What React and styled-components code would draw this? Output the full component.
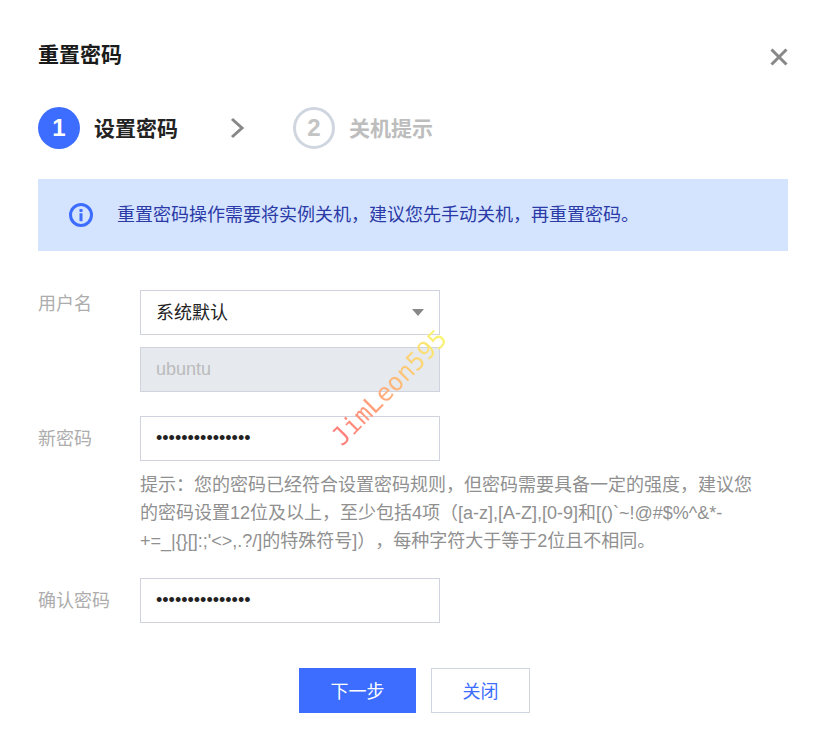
import React from "react";
import styled, { createGlobalStyle } from "styled-components";

const GlobalStyle = createGlobalStyle`
  html, body {
    margin: 0;
    padding: 0;
    background: #fff;
    font-family: "Liberation Sans", "Noto Sans CJK SC", sans-serif;
  }
`;

const Dialog = styled.div`
  position: relative;
  box-sizing: border-box;
  width: 824px;
  height: 750px;
  padding: 37px 36px 0 38px;
  overflow: hidden;
`;

const Header = styled.div`
  display: flex;
  justify-content: space-between;
  align-items: center;
  height: 36px;
`;

const Title = styled.h2`
  margin: 0;
  font-size: 21px;
  line-height: 36px;
  font-weight: 700;
  color: #1a1a1a;
`;

const CloseButton = styled.button`
  display: flex;
  border: none;
  background: none;
  padding: 0;
  margin: 4px 0 0 0;
  cursor: pointer;
`;

const Steps = styled.div`
  display: flex;
  align-items: center;
  height: 42px;
  margin-top: 34px;
`;

const StepNum = styled.div`
  box-sizing: border-box;
  width: 42px;
  height: 42px;
  border-radius: 50%;
  display: flex;
  align-items: center;
  justify-content: center;
  font-size: 24px;
  font-weight: 700;
  color: ${(p) => (p.$active ? "#fff" : "#c4c4c4")};
  background: ${(p) => (p.$active ? "#3d6dff" : "#fff")};
  border: ${(p) => (p.$active ? "none" : "3px solid #d0d6e0")};
`;

const StepLabel = styled.span`
  margin-left: 14px;
  padding-bottom: 2px;
  font-size: 21px;
  font-weight: 700;
  color: ${(p) => (p.$active ? "#222" : "#bdbdbd")};
`;

const StepArrow = styled.svg`
  margin: 0 48px 0 51px;
  display: block;
`;

const Notice = styled.div`
  display: flex;
  align-items: center;
  gap: 24px;
  height: 72px;
  margin-top: 30px;
  padding-left: 31px;
  background: #d5e4fe;
  font-size: 18px;
  color: #2a3aa6;
`;

const NoticeText = styled.span`
  padding-bottom: 5px;
`;

const Form = styled.div`
  display: flex;
  flex-direction: column;
  margin-top: 39px;
`;

const Row = styled.div`
  display: grid;
  grid-template-columns: 102px 1fr;
  margin-top: ${(p) => p.$top || 0}px;
`;

const Label = styled.label`
  font-size: 18px;
  line-height: 26px;
  padding-top: ${(p) => p.$pad ?? 10}px;
  color: #adadad;
`;

const Stack = styled.div`
  display: flex;
  flex-direction: column;
  gap: 12px;
`;

const Select = styled.div`
  box-sizing: border-box;
  width: 300px;
  height: 45px;
  display: flex;
  align-items: center;
  justify-content: space-between;
  padding: 0 15px 3px;
  border: 1px solid #d0d3de;
  font-size: 18px;
  color: #222;
`;

const Caret = styled.span`
  width: 0;
  height: 0;
  margin-top: 3px;
  border-left: 6px solid transparent;
  border-right: 6px solid transparent;
  border-top: 7px solid #888;
`;

const Input = styled.input`
  box-sizing: border-box;
  display: block;
  width: 300px;
  height: 45px;
  padding: 0 15px;
  border: 1px solid #d0d3de;
  border-radius: 0;
  outline: none;
  font-family: inherit;
  font-size: 18px;
  color: ${(p) => (p.disabled ? "#bbb" : "#222")};
  background: ${(p) => (p.disabled ? "#e6e9ee" : "#fff")};
  &:disabled {
    opacity: 1;
    -webkit-text-fill-color: #bbb;
  }
`;

const Hint = styled.p`
  margin: 10px 0 0;
  width: 620px;
  font-size: 18px;
  line-height: 28px;
  color: #909090;
  white-space: nowrap;
  text-spacing-trim: space-all;
`;

const Footer = styled.div`
  display: flex;
  justify-content: center;
  gap: 15px;
  margin-top: 45px;
  padding-left: 3px;
`;

const Button = styled.button`
  box-sizing: border-box;
  width: ${(p) => (p.$primary ? "117px" : "99px")};
  height: 45px;
  padding: 0 0 2px;
  border: 1px solid ${(p) => (p.$primary ? "#3d6dff" : "#d0d6e0")};
  border-radius: 0;
  background: ${(p) => (p.$primary ? "#3d6dff" : "#fff")};
  color: ${(p) => (p.$primary ? "#fff" : "#3d6dff")};
  font-family: inherit;
  font-size: 18px;
  cursor: pointer;
`;

const Watermark = styled.div`
  position: absolute;
  left: 314px;
  top: 373px;
  width: 151px;
  font-family: "DejaVu Sans Mono", monospace;
  font-size: 25px;
  line-height: 29px;
  white-space: nowrap;
  transform: rotate(-45deg);
  background: linear-gradient(90deg, #ff7a7a 0%, #ffb27a 50%, #f8f870 100%);
  -webkit-background-clip: text;
  background-clip: text;
  color: transparent;
  pointer-events: none;
`;

const hintLines = [
  "提示：您的密码已经符合设置密码规则，但密码需要具备一定的强度，建议您",
  "的密码设置12位及以上，至少包括4项（[a-z],[A-Z],[0-9]和[()`~!@#$%^&*-",
  "+=_|{}[]:;'<>,.?/]的特殊符号]），每种字符大于等于2位且不相同。",
];

const App = () => {
  return (
    <>
      <GlobalStyle />
      <Dialog>
        <Header>
          <Title>重置密码</Title>
          <CloseButton aria-label="关闭">
            <svg width="18" height="18" viewBox="0 0 18 18">
              <path d="M1.5 1.5 L16.5 16.5 M16.5 1.5 L1.5 16.5" stroke="#888" strokeWidth="3" fill="none" />
            </svg>
          </CloseButton>
        </Header>

        <Steps>
          <StepNum $active>1</StepNum>
          <StepLabel $active>设置密码</StepLabel>
          <StepArrow width="16" height="24" viewBox="0 0 16 24">
            <path d="M3 3 L13 12 L3 21" stroke="#888" strokeWidth="3" fill="none" />
          </StepArrow>
          <StepNum>2</StepNum>
          <StepLabel>关机提示</StepLabel>
        </Steps>

        <Notice>
          <svg width="24" height="24" viewBox="0 0 24 24">
            <circle cx="12" cy="12" r="10.5" stroke="#3d6dff" strokeWidth="3" fill="none" />
            <rect x="10.5" y="6" width="3" height="3" fill="#3d6dff" />
            <rect x="10.5" y="10.2" width="3" height="8" fill="#3d6dff" />
          </svg>
          <NoticeText>重置密码操作需要将实例关机，建议您先手动关机，再重置密码。</NoticeText>
        </Notice>

        <Form>
          <Row>
            <Label $pad={1}>用户名</Label>
            <Stack>
              <Select>
                系统默认
                <Caret />
              </Select>
              <Input disabled value="ubuntu" readOnly />
            </Stack>
          </Row>
          <Row $top={24}>
            <Label>新密码</Label>
            <div>
              <Input type="password" value="aaaaaaaaaaaaaaa" readOnly />
              <Hint>
                {hintLines.map((line) => (
                  <React.Fragment key={line}>
                    {line}
                    <br />
                  </React.Fragment>
                ))}
              </Hint>
            </div>
          </Row>
          <Row $top={23}>
            <Label>确认密码</Label>
            <Input type="password" value="aaaaaaaaaaaaaaa" readOnly />
          </Row>
        </Form>

        <Footer>
          <Button $primary>下一步</Button>
          <Button>关闭</Button>
        </Footer>

        <Watermark>JimLeon595</Watermark>
      </Dialog>
    </>
  );
};

export default App;
